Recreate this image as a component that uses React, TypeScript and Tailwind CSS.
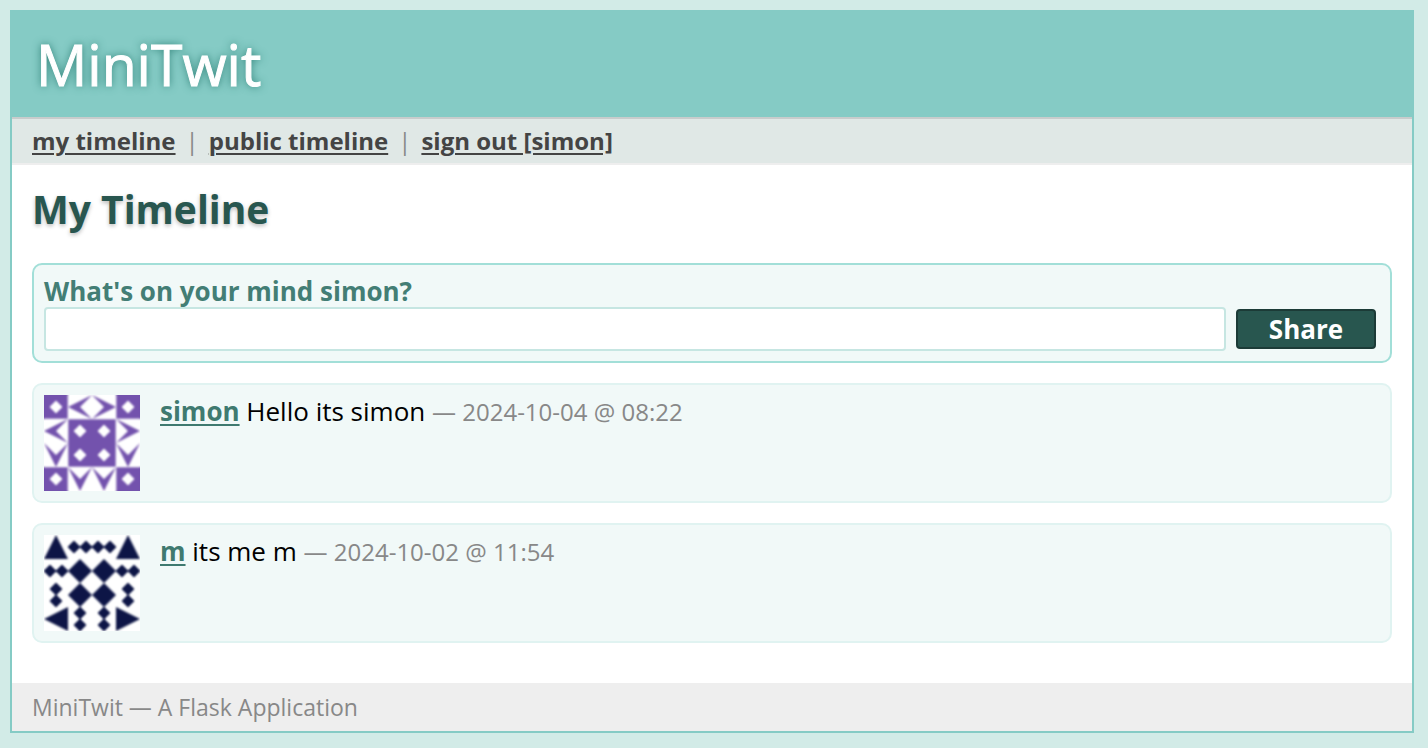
import React from "react";

function SimonAvatar() {
  const corners = [[0, 0], [72, 0], [0, 72], [72, 72]];
  const middle = [[24, 24], [48, 24], [24, 48], [48, 48]];
  const downs = [[0, 48], [72, 48], [24, 72], [48, 72]];
  return (
    <svg viewBox="0 0 96 96" className="size-24 shrink-0" role="img" aria-label="simon">
      <defs>
        <filter id="soft-simon" filterUnits="userSpaceOnUse" x="-8" y="-8" width="112" height="112" colorInterpolationFilters="sRGB">
          <feGaussianBlur stdDeviation="0.8" />
        </filter>
      </defs>
      <rect width="96" height="96" fill="#fff" />
      <g filter="url(#soft-simon)">
        <g fill="#7352ad">
          <path d="M-4 -4h28v28h-28zM72 -4h28v28h-28zM-4 72h28v28h-28zM72 72h28v28h-28zM24 24h48v48h-48z" />
          {[[24, 0], [0, 24]].map(([x, y]) => (
            <path key={`l${x}-${y}`} d={`M${x + 24} ${y}L${x} ${y + 12}l24 12l-12-12z`} />
          ))}
          {[[48, 0], [72, 24]].map(([x, y]) => (
            <path key={`r${x}-${y}`} d={`M${x} ${y}l24 12l-24 12l12-12z`} />
          ))}
          {downs.map(([x, y]) => (
            <path key={`d${x}-${y}`} d={`M${x} ${y}l12 24l12-24l-12 12z`} />
          ))}
        </g>
        <g fill="#fff" stroke="#fff" strokeLinejoin="round">
          {[...corners, ...middle].map(([x, y]) => (
            <path key={`w${x}-${y}`} d={`M${x + 12} ${y + 6}l6 6l-6 6l-6-6z`} />
          ))}
        </g>
        <path d="M24 0v96M72 0v96M0 24h96M0 72h96" stroke="#fff" strokeOpacity="0.6" />
      </g>
    </svg>
  );
}

function MAvatar() {
  const small = [
    [30, 12], [42, 12], [54, 12], [66, 12],
    [6, 36], [18, 36], [78, 36], [90, 36],
    [12, 54], [12, 66], [84, 54], [84, 66],
    [36, 78], [36, 90], [60, 78], [60, 90],
  ];
  const large = [[36, 36], [60, 36], [36, 60], [60, 60]];
  return (
    <svg viewBox="0 0 96 96" className="size-24 shrink-0" role="img" aria-label="m">
      <defs>
        <filter id="soft-m" filterUnits="userSpaceOnUse" x="-8" y="-8" width="112" height="112" colorInterpolationFilters="sRGB">
          <feGaussianBlur stdDeviation="0.8" />
        </filter>
      </defs>
      <rect width="96" height="96" fill="#fff" />
      <g fill="#0d1546" filter="url(#soft-m)">
        <path d="M0 24L12 0l12 24zM72 24L84 0l12 24zM24 72v24L0 84zM72 72v24l24-12z" />
        <g stroke="#0d1546" strokeLinejoin="round">
          {small.map(([x, y]) => (
            <path key={`s${x}-${y}`} d={`M${x} ${y - 6}l6 6l-6 6l-6-6z`} />
          ))}
        </g>
        {large.map(([x, y]) => (
          <path key={`l${x}-${y}`} d={`M${x} ${y - 12}l12 12l-12 12l-12-12z`} />
        ))}
      </g>
    </svg>
  );
}

const messages = [
  { user: "simon", text: "Hello its simon", date: "2024-10-04 @ 08:22", Avatar: SimonAvatar },
  { user: "m", text: "its me m", date: "2024-10-02 @ 11:54", Avatar: MAvatar },
];

const links = ["my timeline", "public timeline", "sign out [simon]"];

export default function App() {
  return (
    <div className="min-h-screen bg-[#d2ebe7] py-[10px] pr-[14px] pl-[10px] font-['Open_Sans',sans-serif] text-[26px] leading-8 text-black">
      <div className="border-2 border-[#85cbc5] bg-white">
        <header className="bg-[#85cbc5] px-6 pt-4 pb-[17px]">
          <h1 className="text-[57px] leading-[72px] text-white [-webkit-text-stroke:1px_white] [text-shadow:0_0_8px_#24776d]">MiniTwit</h1>
        </header>
        <nav className="flex h-12 items-center gap-[10px] border-t-2 border-b-2 border-t-[#c8cccc] border-b-[#eee] bg-[#e0e8e6] px-5 text-2xl text-[#888]">
          {links.map((label, i) => (
            <React.Fragment key={label}>
              {i > 0 && <span>|</span>}
              <a href="#" className="font-bold text-[#444] underline decoration-2 underline-offset-3">{label}</a>
            </React.Fragment>
          ))}
        </nav>
        <main className="px-5 pt-5 pb-10">
          <h2 className="mb-[30px] text-[39px] leading-[48px] font-bold text-[#28564f] [text-shadow:0_2px_4px_#bbb]">My Timeline</h2>
          <form
            className="mb-5 rounded-[10px] border-2 border-[#a2dfd8] bg-[#f1f9f8] p-[10px]"
            onSubmit={(e) => e.preventDefault()}
          >
            <label htmlFor="message" className="block font-bold text-[#437e75]">
              What's on your mind simon?
            </label>
            <div className="flex items-center gap-[10px] pr-1">
              <input
                id="message"
                type="text"
                className="h-11 min-w-0 flex-1 rounded-[4px] border-2 border-[#c6e6e2] bg-white px-1 outline-none"
              />
              <button type="submit" className="flex h-10 w-[140px] items-center justify-center rounded-[4px] border-2 border-[#1c3b37] bg-[#28564f] font-bold text-white">
                Share
              </button>
            </div>
          </form>
          <ul className="flex flex-col gap-5">
            {messages.map(({ user, text, date, Avatar }) => (
              <li key={user} className="flex gap-5 rounded-[10px] border-2 border-[#e0f3f1] bg-[#f1f9f8] p-[10px]">
                <Avatar />
                <p>
                  <a href="#" className="font-bold text-[#3f7a70] underline decoration-2 underline-offset-3">{user}</a>{" "}
                  {text} <small className="text-2xl leading-8 text-[#888]">— {date}</small>
                </p>
              </li>
            ))}
          </ul>
        </main>
        <footer className="bg-[#eee] px-5 py-2 text-[23px] leading-8 text-[#888]">MiniTwit — A Flask Application</footer>
      </div>
    </div>
  );
}
